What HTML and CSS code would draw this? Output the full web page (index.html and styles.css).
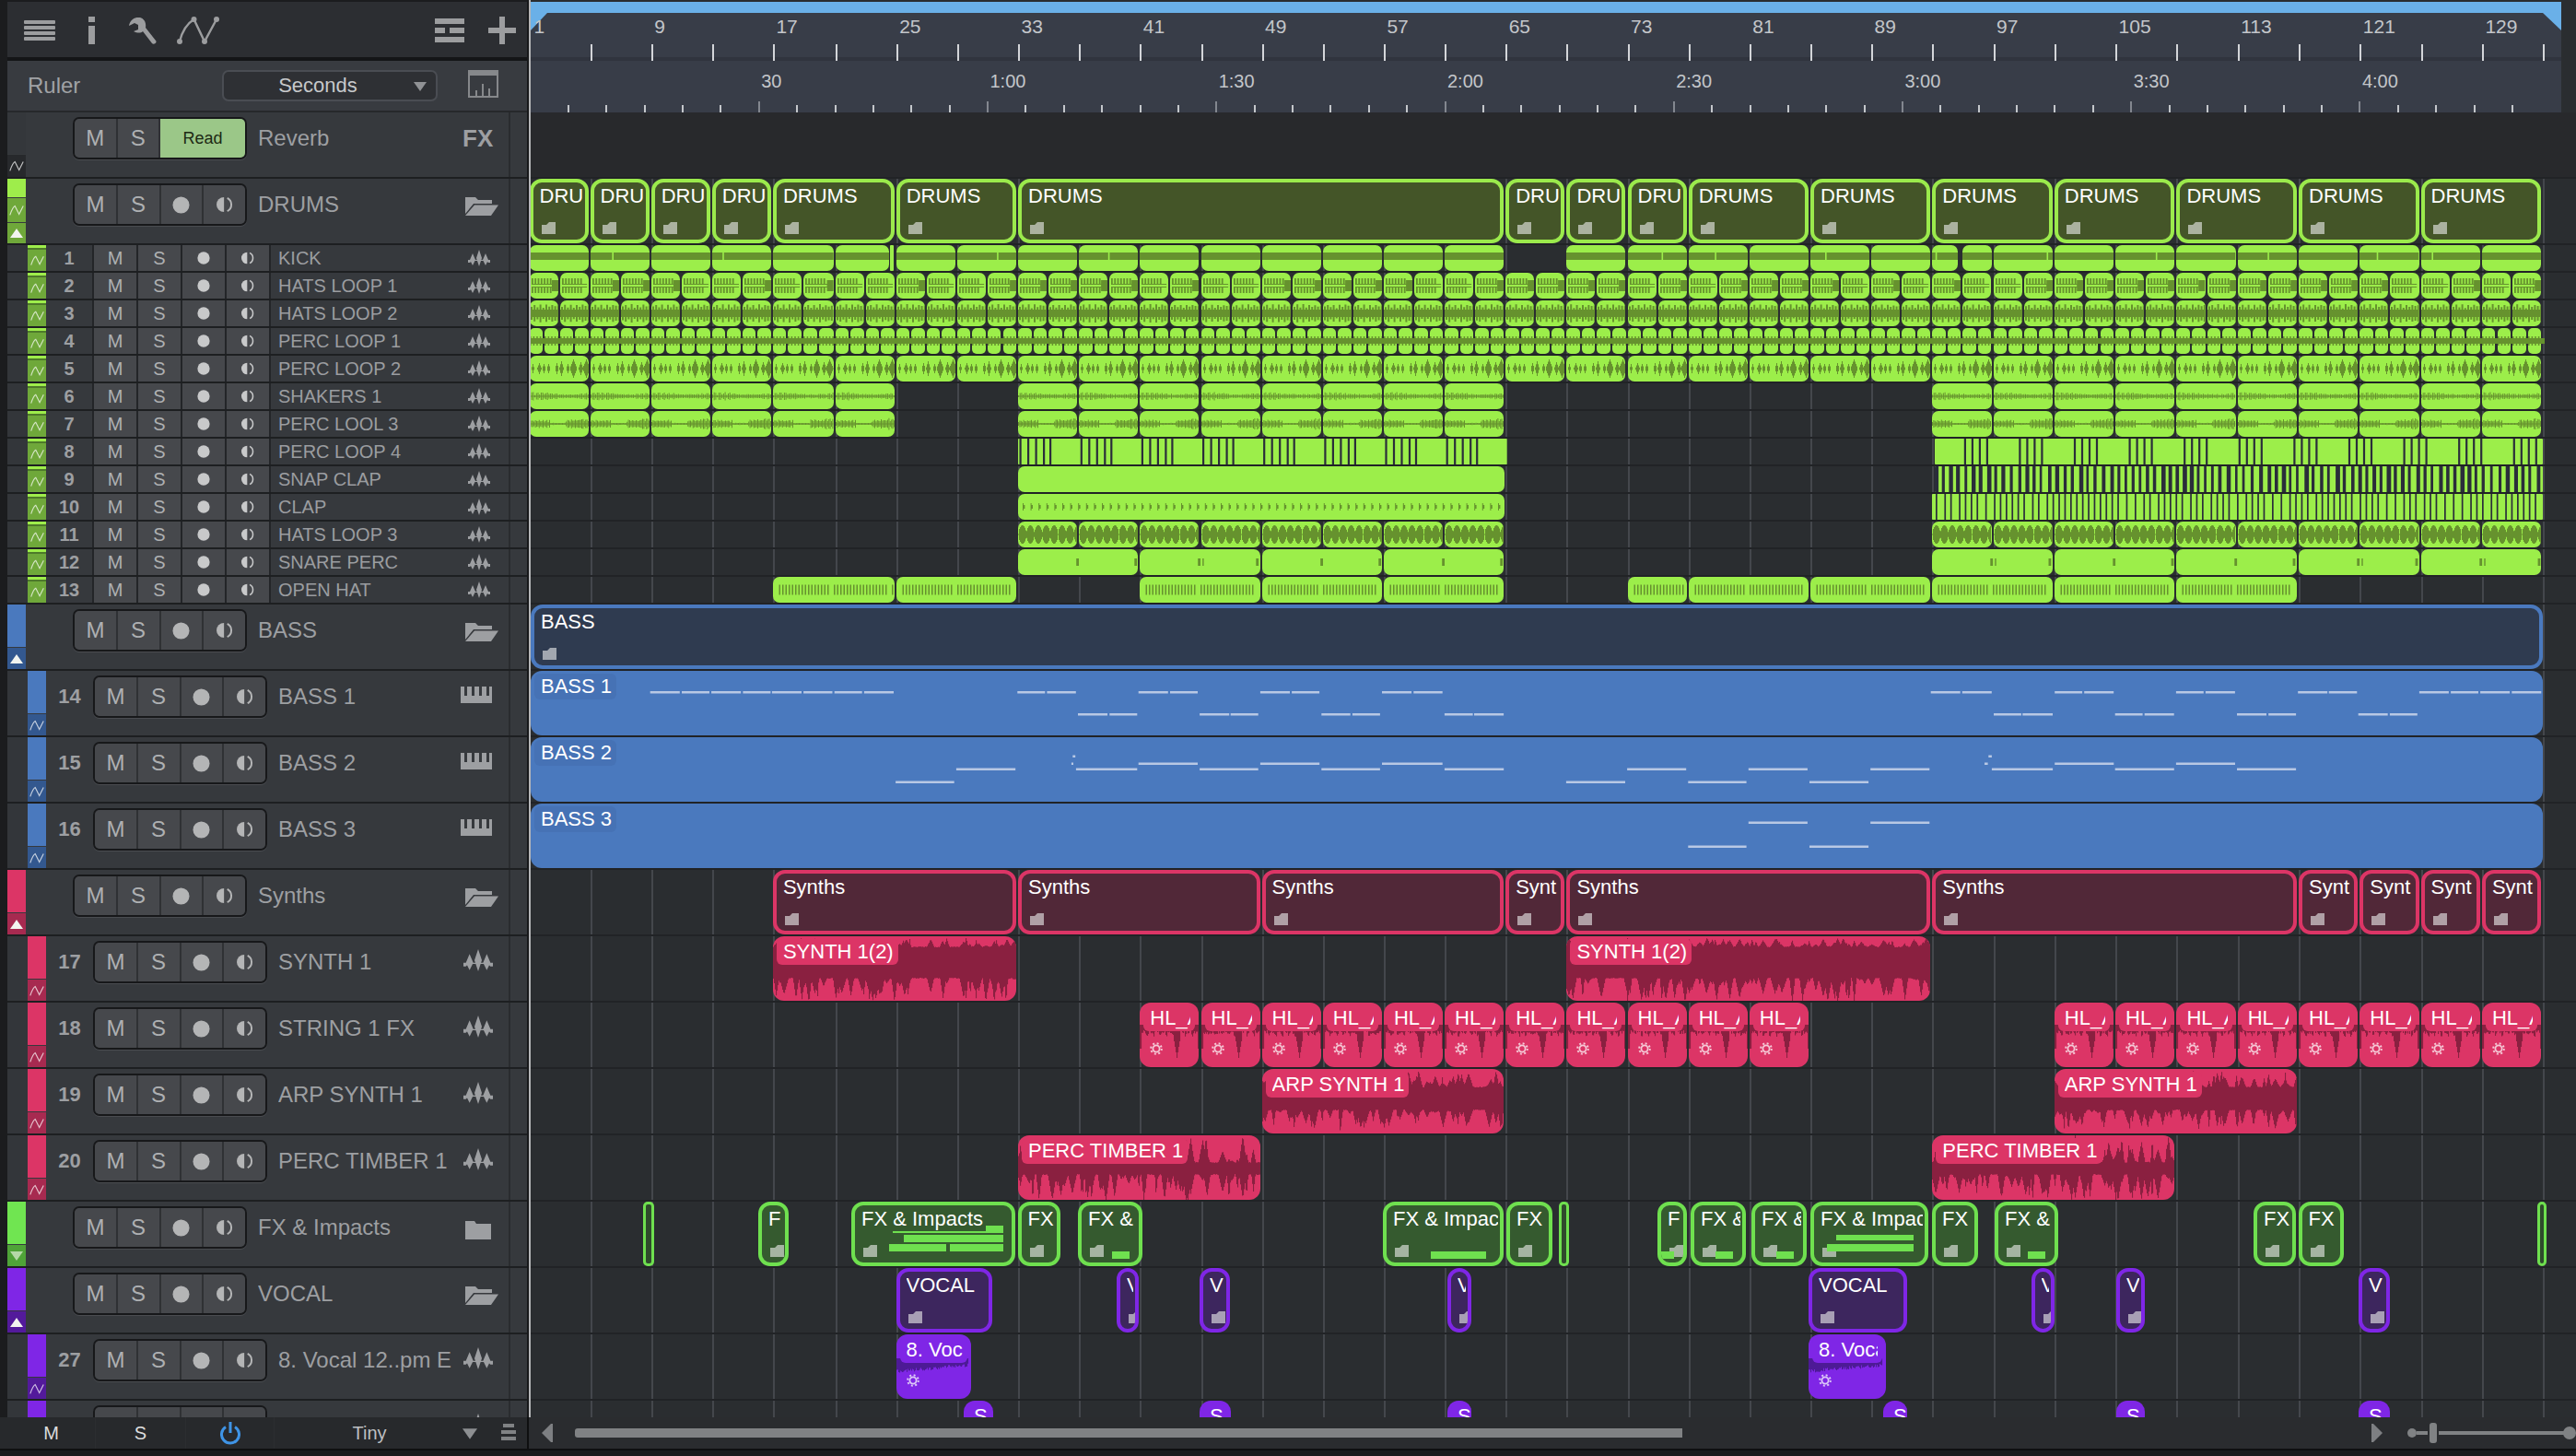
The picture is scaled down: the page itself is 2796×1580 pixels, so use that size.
FILE: index.html
```html
<!DOCTYPE html>
<html lang="en">
<head>
<meta charset="utf-8">
<title>Arrangement</title>
<link rel="stylesheet" href="styles.css">
</head>
<body>
<svg class="defs" width="0" height="0" aria-hidden="true">
  <symbol id="i-auto" viewBox="0 0 20 14"><path d="M2 13 C4 7 6 3 8 2 L13 12 L18 2" fill="none" stroke="currentColor" stroke-width="1.3"/></symbol>
  <symbol id="i-up" viewBox="0 0 14 10"><path d="M7 0 L14 10 H0Z" fill="currentColor"/></symbol>
  <symbol id="i-down" viewBox="0 0 14 10"><path d="M0 0 H14 L7 10Z" fill="currentColor"/></symbol>
  <symbol id="i-rec" viewBox="0 0 20 20"><circle cx="10" cy="10" r="9.5" fill="currentColor"/></symbol>
  <symbol id="i-mon" viewBox="0 0 20 20"><path d="M9 1 A9 9 0 0 0 9 19Z" fill="currentColor"/><path d="M13 2 A9 9 0 0 1 13 18" fill="none" stroke="currentColor" stroke-width="2.2"/></symbol>
  <symbol id="i-peaks" viewBox="0 0 24 18"><path d="M5 4 L8 11 L5 17 L2 11Z M12 0 L15 9 L12 18 L9 9Z M19 4 L22 11 L19 17 L16 11Z M0 11 L24 11 L24 14 L22 14 L20 12 L4 12 L2 14 L0 14Z" fill="currentColor"/></symbol>
  <symbol id="i-fopen" viewBox="0 0 36 20"><path d="M0 0 H11 L14 3 H29 V7 H9 L0 18Z" fill="currentColor"/><path d="M10 8.5 H36 L28 20 H0Z" fill="currentColor"/></symbol>
  <symbol id="i-fclosed" viewBox="0 0 28 20"><path d="M0 0 H10 L12 3 H28 V20 H0Z" fill="currentColor"/></symbol>
  <symbol id="i-keys" viewBox="0 0 34 18"><path d="M0 0 H34 V18 H0Z M4 0 V10 H7 V0Z M12 0 V10 H15 V0Z M20 0 V10 H23 V0Z M28 0 V10 H31 V0Z" fill="currentColor" fill-rule="evenodd"/></symbol>
  <symbol id="i-mini" viewBox="0 0 15 13"><path d="M0 3 H5 L8 0 H15 V13 H0Z" fill="currentColor"/></symbol>
  <symbol id="i-gear" viewBox="0 0 14 14"><circle cx="7" cy="7" r="3.6" fill="none" stroke="currentColor" stroke-width="1.8"/><circle cx="7" cy="7" r="5.8" fill="none" stroke="currentColor" stroke-width="2" stroke-dasharray="2 2.55"/></symbol>
</svg>

<div class="app">
  <div class="main">
    <aside class="panel">
      <div class="toolbar">
        <svg class="ti ti-menu" width="34" height="22" viewBox="0 0 34 22"><path d="M1 0 H33 a1 1 0 0 1 1 1 V3 a1 1 0 0 1 -1 1 H1 a1 1 0 0 1 -1 -1 V1 a1 1 0 0 1 1 -1Z M1 6 H33 a1 1 0 0 1 1 1 V9 a1 1 0 0 1 -1 1 H1 a1 1 0 0 1 -1 -1 V7 a1 1 0 0 1 1 -1Z M1 12 H33 a1 1 0 0 1 1 1 V15 a1 1 0 0 1 -1 1 H1 a1 1 0 0 1 -1 -1 V13 a1 1 0 0 1 1 -1Z M1 18 H33 a1 1 0 0 1 1 1 V21 a1 1 0 0 1 -1 1 H1 a1 1 0 0 1 -1 -1 V19 a1 1 0 0 1 1 -1Z" fill="currentColor"/></svg>
        <svg class="ti ti-info" width="7" height="30" viewBox="0 0 7 30"><path d="M0 0 H7 V6 H0Z M0 10 H7 V30 H0Z" fill="currentColor"/></svg>
        <svg class="ti ti-wrench" width="31" height="30" viewBox="0 0 31 30"><path d="M12 0 C6 -1 1 3 0 9 L6 6 L10 8 L10 13 L5 15 C9 17 13 17 15 15 L25 28 C27 30 31 27 29 25 L18 11 C19 5 16 1 12 0Z" fill="currentColor"/></svg>
        <svg class="ti ti-curve" width="47" height="30" viewBox="0 0 47 30"><path d="M3 27 C6 15 12 7 18.5 3 L30 27 L43 3" fill="none" stroke="currentColor" stroke-width="2.4"/><circle cx="3" cy="27" r="3" fill="currentColor"/><circle cx="18.5" cy="3" r="3" fill="currentColor"/><circle cx="30" cy="27" r="3" fill="currentColor"/><circle cx="43" cy="3" r="3" fill="currentColor"/></svg>
        <svg class="ti ti-list" width="32" height="26" viewBox="0 0 32 26"><path d="M0 0 H32 V6 H0Z M0 10 H11 V16 H0Z M16 10 H32 V16 H16Z M0 20 H32 V26 H0Z" fill="currentColor"/></svg>
        <svg class="ti ti-plus" width="30" height="30" viewBox="0 0 30 30"><path d="M12 0 H18 V12 H30 V18 H18 V30 H12 V18 H0 V12 H12Z" fill="currentColor"/></svg>
      </div>
      <div class="rulerbar">
        <span class="rb-label">Ruler</span>
        <div class="select"><span class="select-text">Seconds</span><svg class="select-tri" width="16" height="10"><use href="#i-down"/></svg></div>
        <svg class="rb-icon" width="33" height="30" viewBox="0 0 33 30"><path d="M0 0 H33 V30 H0Z M2 6 V28 H31 V6Z M8 22 H10 V28 H8Z M15 15 H17 V28 H15Z M22 20 H24 V28 H22Z" fill="currentColor" fill-rule="evenodd"/></svg>
      </div>
      <div class="tracks" id="tracks"></div>
    </aside>
    <section class="arrange">
      <div class="ruler" id="ruler">
        <div class="loop"></div>
        <div class="loop-l"></div>
        <div class="loop-r"></div>
        <div class="ruler-sep"></div>
      </div>
      <div class="lanes" id="lanes"></div>
    </section>
  </div>
  <footer class="bottom">
    <div class="bb-left">
      <span class="bb-cell bb-m">M</span>
      <span class="bb-cell bb-s">S</span>
      <span class="bb-cell bb-pw"><svg width="22" height="26" viewBox="0 0 22 26"><path d="M6 6.5 A9.5 9.5 0 1 0 16 6.5" fill="none" stroke="currentColor" stroke-width="3"/><path d="M11 1 V13" stroke="currentColor" stroke-width="3"/></svg></span>
      <span class="bb-cell bb-size"><span>Tiny</span><svg class="bb-tri" width="16" height="12"><use href="#i-down"/></svg></span>
      <svg class="bb-list" width="16" height="18" viewBox="0 0 16 18"><path d="M2 0 H14 V4 H2Z M0 7 H16 V11 H0Z M0 14 H16 V18 H0Z" fill="currentColor"/></svg>
    </div>
    <div class="bb-right">
      <svg class="bb-arrow" width="12" height="20" viewBox="0 0 12 20"><path d="M12 0 V20 H10 L0 10 L10 0Z" fill="currentColor"/></svg>
      <div class="thumb"></div>
      <svg class="bb-arrow bb-arrow-r" width="12" height="20" viewBox="0 0 12 20"><path d="M0 0 V20 H2 L12 10 L2 0Z" fill="currentColor"/></svg>
      <div class="zoom">
        <span class="z-dot"></span><span class="z-line z-line-a"></span><span class="z-handle"></span><span class="z-line z-line-b"></span><span class="z-knob"></span>
      </div>
    </div>
  </footer>
</div>
<script src="app.js"></script>
</body>
</html>
```

FILE: styles.css
```css
* { box-sizing: border-box; }
html, body { margin: 0; padding: 0; }
body {
  width: 2796px; height: 1580px; overflow: hidden;
  background: #1b1c1e;
  font-family: "Liberation Sans", Arial, sans-serif;
  color: #a3a5a8;
}
.defs { position: absolute; }
.app { width: 2796px; height: 1580px; display: flex; flex-direction: column; }
.main { display: flex; height: 1538px; padding-left: 8px; }

/* left panel */
.panel { width: 566px; height: 1538px; display: flex; flex-direction: column; overflow: hidden;
  border-right: 2px solid #17181a; padding-top: 2px; flex: none; }
.toolbar { height: 64px; flex: none; background: #2c2e32; border-bottom: 4px solid #141517; position: relative; }
.ti { position: absolute; color: #9c9d9f; }
.ti-menu { left: 18px; top: 20px; }
.ti-info { left: 88px; top: 16px; }
.ti-wrench { left: 132px; top: 17px; }
.ti-curve { left: 184px; top: 16px; }
.ti-list { left: 464px; top: 18px; }
.ti-plus { left: 522px; top: 16px; }
.rulerbar { height: 56px; flex: none; background: #383b40; border-bottom: 2px solid #26282b;
  display: flex; align-items: center; position: relative; }
.rb-label { margin-left: 22px; font-size: 24px; color: #a0a2a5; width: 211px; }
.select { width: 234px; height: 34px; border: 2px solid #4a4d53; border-radius: 7px; background: #2e3034;
  display: flex; align-items: center; justify-content: center; position: relative; }
.select-text { font-size: 22px; color: #c6c8ca; margin-right: 26px; }
.select-tri { position: absolute; right: 9px; top: 11px; color: #909295; }
.rb-icon { color: #86888b; margin-left: 33px; margin-top: -4px; }
.tracks { flex: 1; overflow: hidden; }

.row { display: flex; height: 72px; background: #36393d; border-bottom: 2px solid #1d1f21; position: relative; }
.row.small { height: 30px; }
.strip { width: 20px; flex: none; display: flex; flex-direction: column; gap: 1px; }
.strip-flush { gap: 0; }
.strip-wide { margin-right: 2px; }
.gutter { width: 22px; flex: none; background: #33363a; }
.seg { display: flex; align-items: center; justify-content: center; flex: none; }
.seg svg { display: block; }
.seg-auto svg { color: rgba(255,255,255,.72); }
.seg-tri svg { color: #f2f4ef; }
.seg-tri-dim svg { color: #b5d8a8; }

.num { width: 51px; flex: none; display: flex; align-items: center; justify-content: center; height: 45px; margin-top: 5px;
  font-size: 22px; font-weight: bold; color: #9d9fa2; }
.btns { display: flex; height: 46px; margin-top: 5px; flex: none; border: 2px solid #17181a; border-radius: 7px; overflow: hidden;
  background: #2f3134; gap: 2px; box-shadow: 0 1px 0 #4a4c50; }
.f-btns { margin-left: 49px; width: 189px; }
.s-btns { width: 189px; }
.btn { flex: 1; background: #46484c; display: flex; align-items: center; justify-content: center; font-size: 24px; color: #aeb0b2; }
.btn svg { color: #b4b5b6; }
.btn-read { flex: none; width: 92px; background: #9bc788; color: #1d2a14; font-size: 18px; }
.name { margin-left: 12px; margin-top: 11px; font-size: 24px; line-height: 34px; flex: 1; min-width: 0; white-space: nowrap; overflow: hidden; color: #9d9fa2; }
.right-icon { flex: none; width: 47px; display: flex; align-items: flex-start; padding-top: 20px; color: #9d9fa2; }
.right-icon.fx { font-size: 26px; font-weight: bold; padding-top: 13px; margin-left: -3px; width: 50px; }
.right-icon.wide { margin-left: -2px; width: 49px; padding-top: 14px; }
.right-icon.keys { margin-left: -5px; width: 52px; padding-top: 17px; }
.right-icon.closed { padding-top: 21px; }
.rail { width: 20px; flex: none; border-left: 2px solid #2a2c2f; }

.small .num { height: 28px; margin-top: 0; font-size: 20px; width: 50px; }
.s-cells { display: flex; gap: 2px; background: #232528; border-left: 2px solid #232528; border-right: 2px solid #232528; flex: none; height: 28px; }
.cell { width: 46px; background: #46484c; font-size: 20px; display: flex; align-items: center; justify-content: center; color: #aeb0b2; }
.cell svg { color: #c8c9ca; }
.small .name { font-size: 20px; line-height: 28px; margin: 0 0 0 8px; color: #9b9da0; }
.small .right-icon { padding-top: 5px; width: 44px; }

/* arrange */
.arrange { flex: 1; min-width: 0; height: 1538px; display: flex; flex-direction: column; border-left: 2px solid #b5b6b8; position: relative; overflow: hidden; background: #2a2d30; }
.ruler { width: 2204px; flex: none; margin-top: 2px; background: #383d48; position: relative; height: 120px; }
.loop { position: absolute; left: 0; top: 0; width: 2204px; height: 12px; background: #6ab0e8; }
.loop-l { position: absolute; left: 0; top: 12px; width: 18px; height: 19px; background: #6ab0e8; clip-path: polygon(0 0, 100% 0, 0 100%); }
.loop-r { position: absolute; right: 0; top: 12px; width: 20px; height: 19px; background: #6ab0e8; clip-path: polygon(0 0, 100% 0, 100% 100%); }
.ruler-sep { position: absolute; left: 0; top: 60px; width: 100%; height: 4px; background: #30343e; }
.tick { position: absolute; width: 2px; background: #d3d5d9; }
.tick-bar { top: 46px; height: 18px; }
.tick-sec { top: 112px; height: 8px; background: #c4c7cb; }
.tick-maj { top: 108px; height: 12px; background: #83878f; }
.rlabel { position: absolute; color: #c3c6ca; white-space: nowrap; }
.rl-bar { top: 15px; font-size: 21px; line-height: 24px; }
.rl-sec { top: 74px; font-size: 20px; line-height: 24px; }

.lanes { flex: 1; position: relative; overflow: hidden; background: #2a2d30; }
.gline { position: absolute; top: 0; bottom: 0; width: 2px; background: #44474c; }
.lane { height: 72px; position: relative; border-bottom: 2px solid #212326; }
.lane.small { height: 30px; }
.lane-top { background: #28292c; }
.pband { position: absolute; top: 11px; height: 6px; background: #66922e; }

.clip { position: absolute; top: 0; bottom: 0; overflow: hidden; color: #fff; }
.clip svg.wave { position: absolute; left: 0; top: 0; display: block; }
.c-ev { border-radius: 12px; }
.c-sm { border-radius: 7px; }
.c-xs { border-radius: 5px; }
.c-sq { border-radius: 1px; }
.g { background: #9cee4a; }
.g .wf { fill: #66922e; }
.g .wb { fill: #2a2d3a; }
.g .wl { fill: #9cee4a; }
.bl { background: #4a79be; }
.bl .wf { fill: #b8c8e4; }
.rd { background: #dc3566; }
.rd .wf { fill: #8a2040; }
.vi { background: #7f26e6; }
.vi .wf { fill: #4d1a96; }
.chip { position: relative; display: block; width: max-content; font-size: 22px; line-height: 28px; height: 28px; margin: 3px 0 0 4px; padding: 0 5px 0 7px;
  border-radius: 6px; white-space: nowrap; max-width: calc(100% - 8px); }
.chip-t { display: block; overflow: hidden; }
.narrow .chip { padding-right: 0; max-width: none; }
.rd .chip { background: #dc3566; }
.vi .chip { background: #7f26e6; }
.bl .chip { background: #4672b5; }
.gear { position: absolute; left: 11px; bottom: 13px; }
.rd .gear { color: #f5c9d6; }
.vi .gear { color: #dcc8f7; }

.fold { border: 4px solid; border-radius: 13px; padding: 0 2px 0 7px; }
.fold-in { height: 28px; line-height: 29px; font-size: 22px; white-space: nowrap; overflow: hidden; position: relative; }
.mini { position: absolute; left: 9px; bottom: 6px; opacity: .6; color: #f0f0f0; }
.f-g { background: #445528; border-color: #9bea4c; }
.f-b { background: #2f3b50; border-color: #4a79be; }
.f-r { background: #512838; border-color: #dc3566; }
.f-l { background: #355a2f; border-color: #6fe04f; }
.f-v { background: #3d265e; border-color: #7f26e6; }
.f-thin { border-width: 3px; border-radius: 5px; padding: 0; background: #2f4a2c; }
.fxbar { position: absolute; background: #6fe04f; }

/* bottom */
.bottom { height: 36px; flex: none; display: flex; background: #27292c; border-bottom: 2px solid #0f1011; }
.bb-left { width: 566px; margin-left: 8px; flex: none; position: relative; display: flex; align-items: center; border-right: 2px solid #0e0f10; }
.bb-cell { display: flex; align-items: center; justify-content: center; height: 34px; border-right: 1px solid #2b2d30; flex: none; }
.bb-m { width: 96px; font-size: 20px; color: #dcdcdc; }
.bb-s { width: 98px; font-size: 20px; color: #dcdcdc; }
.bb-pw { width: 96px; color: #3f94e6; }
.bb-size { width: 232px; padding-right: 26px; font-size: 20px; color: #bdbfc1; border-right: 0; position: relative; }
.bb-tri { position: absolute; right: 12px; top: 12px; color: #8d8f92; }
.bb-list { position: absolute; left: 536px; top: 7px; color: #808284; }
.bb-right { flex: 1; display: flex; align-items: center; background: #2a2c2f; color: #7d7f82; min-width: 0; overflow: hidden; }
.bb-arrow { margin-left: 14px; flex: none; }
.thumb { width: 1202px; height: 10px; margin-left: 24px; background: #808284; border-radius: 3px 0 0 3px; flex: none; }
.bb-arrow-r { margin-left: 748px; }
.zoom { display: flex; align-items: center; margin-left: 27px; flex: none; }
.z-dot { width: 10px; height: 10px; border-radius: 50%; background: #808284; }
.z-line { height: 4px; background: #808284; }
.z-line-a { width: 12px; }
.z-handle { width: 8px; height: 22px; margin: 0 2px; border-radius: 3px; background: #808284; }
.z-line-b { width: 136px; }
.z-knob { width: 14px; height: 14px; border-radius: 50%; background: #808284; margin-left: -1px; flex: none; }
```

FILE: app.js
```javascript
// Track list and arrangement are built from data; waveforms are seeded noise.
const ARR_LEFT = 576;
const X = i => i < 5 ? 574.5 + 66.1 * i : i <= 23 ? 972.7 + 66.15 * (i - 6) : 2097.2 + 66.3 * (i - 23);

let seed = 1234567;
const rnd = () => { seed = (seed * 1664525 + 1013904223) >>> 0; return seed / 4294967296; };
const rect = (x, y, w, h) => `M${x.toFixed(1)} ${y.toFixed(1)}h${w.toFixed(1)}v${h.toFixed(1)}h${(-w).toFixed(1)}z`;
const sym = (x, a, c, w) => rect(x, c - a, w || 1, a * 2);
const use = (id, w, h, cls) => `<svg ${cls ? `class="${cls}" ` : ''}width="${w}" height="${h}"><use href="#${id}"/></svg>`;

// The visible part of a clip's name: characters that begin inside the room available.
const ctx = document.createElement('canvas').getContext('2d');
ctx.font = '22px "Liberation Sans"';
function fit(name, avail) {
  let out = '', at = 0;
  avail = Math.max(1, avail);
  for (const ch of name) {
    if (at >= avail) break;
    out += ch;
    at = ctx.measureText(out).width;
  }
  return out.trimEnd().replace(/&/g, '&amp;');
}

/* ---------- left panel ---------- */
const colours = {
  g: ['#9eed4b', '#6fa83a'], b: ['#4a79be', '#33588f'], r: ['#dc3566', '#a72a50'],
  l: ['#70e551', '#4fa338'], v: ['#7f26e6', '#531a9b']
};
const recBig = use('i-rec', 19, 19), monBig = use('i-mon', 18, 18);
const bigBtns = cls => `<div class="btns ${cls}"><span class="btn">M</span><span class="btn">S</span><span class="btn">${recBig}</span><span class="btn">${monBig}</span></div>`;

function seg(h, col, cls, inner) {
  return `<div class="seg ${cls || ''}" style="height:${h}px;background:${col}">${inner || ''}</div>`;
}
function folderRow(t) {
  const [hi, lo] = colours[t.c];
  let s;
  if (t.c === 'g') s = seg(20, hi) + seg(26, lo, 'seg-auto', use('i-auto', 18, 14)) + seg(22, lo, 'seg-tri', use('i-up', 14, 10));
  else if (t.closed) s = seg(46, hi) + seg(23, lo, 'seg-tri-dim', use('i-down', 14, 10));
  else s = seg(46, hi) + seg(23, lo, 'seg-tri', use('i-up', 14, 10));
  return `<div class="row"><div class="strip strip-wide">${s}</div>${bigBtns('f-btns')}
    <div class="name">${t.name}</div>
    <div class="right-icon ${t.closed ? 'closed' : ''}">${t.closed ? use('i-fclosed', 28, 20) : use('i-fopen', 36, 20)}</div><div class="rail"></div></div>`;
}
function reverbRow() {
  return `<div class="row"><div class="strip strip-wide">${seg(45, '#34373b') + seg(24, '#27292c', 'seg-auto', use('i-auto', 18, 14))}</div>
    <div class="btns f-btns"><span class="btn">M</span><span class="btn">S</span><span class="btn btn-read">Read</span></div>
    <div class="name">Reverb</div><div class="right-icon fx">FX</div><div class="rail"></div></div>`;
}
function subRow(t) {
  const [hi, lo] = colours[t.c];
  const icon = t.keys ? use('i-keys', 34, 18) : use('i-peaks', 32, 24);
  return `<div class="row"><div class="gutter"></div><div class="strip">${seg(46, hi) + seg(23, lo, 'seg-auto', use('i-auto', 18, 14))}</div>
    <div class="num">${t.n}</div>${bigBtns('s-btns')}<div class="name">${t.name}</div>
    <div class="right-icon ${t.keys ? 'keys' : 'wide'}">${icon}</div><div class="rail"></div></div>`;
}
function smallRow(n, name) {
  return `<div class="row small"><div class="gutter"></div><div class="strip strip-flush">${seg(3, '#9eed4b') + seg(2, '#4e7a2a') + seg(23, '#6fa83a', 'seg-auto', use('i-auto', 17, 13))}</div>
    <div class="num">${n}</div><div class="s-cells"><span class="cell">M</span><span class="cell">S</span><span class="cell">${use('i-rec', 14, 14)}</span><span class="cell">${use('i-mon', 14, 14)}</span></div>
    <div class="name">${name}</div><div class="right-icon">${use('i-peaks', 24, 18)}</div><div class="rail"></div></div>`;
}
const drumNames = ['KICK', 'HATS LOOP 1', 'HATS LOOP 2', 'PERC LOOP 1', 'PERC LOOP 2', 'SHAKERS 1', 'PERC LOOL 3', 'PERC LOOP 4', 'SNAP CLAP', 'CLAP', 'HATS LOOP 3', 'SNARE PERC', 'OPEN HAT'];
let html = reverbRow() + folderRow({ c: 'g', name: 'DRUMS' });
drumNames.forEach((n, i) => html += smallRow(i + 1, n));
html += folderRow({ c: 'b', name: 'BASS' });
html += subRow({ c: 'b', n: 14, name: 'BASS 1', keys: 1 }) + subRow({ c: 'b', n: 15, name: 'BASS 2', keys: 1 }) + subRow({ c: 'b', n: 16, name: 'BASS 3', keys: 1 });
html += folderRow({ c: 'r', name: 'Synths' });
html += subRow({ c: 'r', n: 17, name: 'SYNTH 1' }) + subRow({ c: 'r', n: 18, name: 'STRING 1 FX' }) + subRow({ c: 'r', n: 19, name: 'ARP SYNTH 1' }) + subRow({ c: 'r', n: 20, name: 'PERC TIMBER 1' });
html += folderRow({ c: 'l', name: 'FX &amp; Impacts', closed: 1 }) + folderRow({ c: 'v', name: 'VOCAL' });
html += subRow({ c: 'v', n: 27, name: '8. Vocal 12..pm E' }) + subRow({ c: 'v', n: '', name: '' });
document.getElementById('tracks').innerHTML = html;

/* ---------- ruler ---------- */
let rul = '';
const L = x => (x - ARR_LEFT).toFixed(1);
for (let i = 1; i <= 33; i++) rul += `<span class="tick tick-bar" style="left:${L(X(i))}px"></span>`;
for (let k = 0; k <= 16; k++) {
  rul += `<span class="rlabel rl-bar" style="left:${L(X(k * 2) + (k === 0 ? 5 : 3.5))}px">${k * 8 + 1}</span>`;
}
const secLabels = ['30', '1:00', '1:30', '2:00', '2:30', '3:00', '3:30', '4:00'];
secLabels.forEach((t, k) => {
  const x = 822.7 + k * 248.25;
  rul += `<span class="tick tick-maj" style="left:${L(x)}px"></span><span class="rlabel rl-sec" style="left:${L(x + 3.5)}px">${t}</span>`;
});
for (let k = -5; k <= 47; k++) {
  if (k % 6 === 0 && k >= 0) continue;
  const x = 822.7 + k * 41.375;
  if (x < 2765) rul += `<span class="tick tick-sec" style="left:${L(x)}px"></span>`;
}
document.getElementById('ruler').insertAdjacentHTML('beforeend', rul);

/* ---------- clips ---------- */
const svg = (w, h, parts) => `<svg class="wave" width="${Math.ceil(w)}" height="${h}">${parts.map(([cls, d]) => `<path class="${cls}" d="${d}"/>`).join('')}</svg>`;
function clip(x1, x2, cls, inner) {
  return `<div class="clip ${cls}" style="left:${L(x1)}px;width:${(x2 - x1).toFixed(1)}px">${inner || ''}</div>`;
}
function folder(x1, x2, c, name, extra) {
  const w = x2 - x1;
  if (w < 16) return clip(x1, x2, `fold f-${c} f-thin`);
  return clip(x1, x2, `fold f-${c}`, `<div class="fold-in">${fit(name, w - 24)}</div>${use('i-mini', 15, 13, 'mini')}${extra || ''}`);
}
const chip = (name, w) => `<span class="chip"><span class="chip-t">${fit(name, w - 22)}</span></span>`;
const cellClip = (a, b, fn, cls) => {
  const x1 = X(a), x2 = X(b) - 2, w = x2 - x1;
  return clip(x1, x2, `g ${cls || 'c-sm'}`, svg(w, 28, fn(w, x1)));
};
const H = 28, C = 14;

// 1 kick
const kickBreaks = [664, 784, 1082, 1203, 1803, 1861, 1981, 2101, 2221, 2340, 2461, 2580, 2639];
const kickWave = (w, x1) => {
  let d = rect(0, 8, w, 8), l = '';
  kickBreaks.forEach(b => { if (b > x1 && b < x1 + w) l += rect(b - x1, 8, 1.6, 8); });
  return [['wf', d], ['wl', l]];
};
// 2 hats loop 1
const hats1 = (w) => {
  let d = '';
  for (let x = 2; x < w - 8; x += 3.3) d += rect(x, 6, 1.8, 6.5) + rect(x, 15.5, 1.8, 6.5);
  d += rect(2, 12, w - 4, 1) + rect(2, 15, w - 4, 1);
  if (rnd() > .4) d += rect(w - 7, 8, 7, 12);
  return [['wf', d]];
};
// 3 hats loop 2
const hats2 = (w) => {
  let d = rect(0, 10, w, 8);
  for (let x = 1; x < w - 1; x += 3.2) {
    const a = 5 + Math.abs(Math.sin(x * .45)) * 4 + rnd();
    d += sym(x, a, C, 2);
  }
  return [['wf', d]];
};
// 4 perc loop 1
const perc1 = (w) => {
  let d = '';
  for (let x = 0; x < w; x += 3.6) d += sym(x, 5, C, 1.6);
  return [['wf', d]];
};
// 5 perc loop 2
const blobs = [[3, 5, 1.5], [10, 6, 2.5], [15, 5, 2], [20, 5, 2], [29, 6, 2], [34, 8, 2.5], [41, 5, 2], [47, 10, 4], [55, 7, 2.5], [61, 10, 4.2]];
const perc2 = (w) => {
  let d = '';
  for (let x = 0; x < w; x++) {
    let a = 0;
    blobs.forEach(([c, h, b]) => { a = Math.max(a, h * (1 - Math.abs(x - c) / b)); });
    if (a > .4) d += sym(x, a, C, 1);
  }
  return [['wf', d]];
};
// 6 shakers
const shakers = (w) => {
  let d = rect(0, 13.5, w, 1);
  for (let x = 0; x < w; x += 1.7) {
    const a = 1 + (Math.abs(Math.sin(x * .6)) * 2.8) * (.6 + .4 * Math.sin(x * .09 + 1)) + rnd() * 1;
    d += sym(x, a, C, 1);
  }
  return [['wf', d]];
};
// 7 perc lool 3
const lool3 = (w) => {
  let d = rect(0, 13.5, w, 1);
  for (let x = 0; x < w; x += 1.4) {
    const t = x / w;
    const env = t < .33 ? 4 : t < .6 ? .6 : t < .85 ? 4.5 : 6;
    d += sym(x, .6 + env * (.45 + .55 * Math.abs(Math.sin(x * .8))) * (.7 + rnd() * .3), C, 1);
  }
  return [['wf', d]];
};
// 8 perc loop 4, bars
const bars = (x1, w, start, period, pattern, wd) => {
  let d = '';
  for (let s = start; s < x1 + w; s += period) pattern.forEach(o => {
    const px = s + o - x1;
    if (px > -3 && px < w) d += rect(px, 0, wd, H);
  });
  return d;
};
// 11 hats loop 3
const hats3 = (w) => {
  let d = '';
  for (let x = 0; x < w - 1; x++) {
    const p = Math.abs(Math.sin(x * Math.PI / 8.6));
    d += sym(x, Math.pow(p, .55) * 9.5 + .5, C, 1);
  }
  return [['wf', d]];
};
// 13 open hat
const openHat = (w) => {
  let d = '';
  for (let x = 3; x < w - 2; x += 3.5) {
    if (x % 62 < 3.6) continue;
    d += sym(x, 5.5, C, 1.5);
  }
  return [['wf', d]];
};

const range = (a, b, step) => { const o = []; for (let i = a; i < b - 1e-6; i += step) o.push(i); return o; };
const drumRows = Array.from({ length: 13 }, () => '');

// kick
range(0, 16, 1).forEach(i => {
  if (i === 5) {
    drumRows[0] += clip(X(5), X(6) - 8, 'g c-sm', svg(60, H, kickWave(60, X(5)))) + clip(X(6) - 6.5, X(6) - 3, 'g c-sq');
  } else drumRows[0] += cellClip(i, i + 1, kickWave);
});
range(17, 33, 1).forEach(i => {
  if (i === 23) {
    drumRows[0] += clip(X(23), X(23) + 28, 'g c-sm', svg(28, H, kickWave(28, X(23)))) + clip(X(23) + 33, X(24) - 2, 'g c-sm', svg(32, H, kickWave(32, X(23) + 33)));
  } else drumRows[0] += cellClip(i, i + 1, kickWave);
});
range(0, 33, .5).forEach(i => {
  drumRows[1] += cellClip(i, i + .5, hats1);
  drumRows[2] += cellClip(i, i + .5, hats2);
});
range(0, 33, .25).forEach(i => { drumRows[3] += cellClip(i, i + .25, perc1, 'c-xs'); });
drumRows[3] += `<span class="pband" style="left:${L(X(0))}px;width:${(X(33) + 2 - X(0)).toFixed(1)}px"></span>`;
range(0, 33, 1).forEach(i => { drumRows[4] += cellClip(i, i + 1, perc2); });
[...range(0, 6, 1), ...range(8, 16, 1), ...range(23, 33, 1)].forEach(i => {
  drumRows[5] += cellClip(i, i + 1, shakers);
  drumRows[6] += cellClip(i, i + 1, lool3);
});
// row 8 bars
const sq = (x1, x2, parts) => clip(x1, x2, 'g c-sq', svg(x2 - x1, H, parts));
drumRows[7] += sq(X(8), X(16) + 2, [['wb', bars(X(8), X(16) + 2 - X(8), X(8), 66.15, [1.5, 10, 18.5, 27, 34], 2.2)]]);
drumRows[7] += sq(X(23) + 3, X(33), [['wb', bars(X(23) + 3, X(33) - X(23) - 3, 2073, 59.6, [59, 67, 75, 83], 2.2)]]);
// row 9
drumRows[8] += clip(X(8), X(16) - 1, 'g c-sm');
let rb = '';
{
  const w = X(33) - X(23) - 3;
  for (let x = 0; x < w; x += 7.7 + (rnd() > .7 ? 1.5 : 0)) rb += rect(x, 0, 2.6 + rnd() * 2.2, H);
  drumRows[8] += sq(X(23) + 3, X(33), [['wb', rb]]);
}
// row 10
{
  const w = X(16) - X(8) - 1;
  let d = '';
  for (let x = 5; x < w; x += 8.6) d += sym(x, 4, C, 1) + sym(x + 1, 2, C, 1.4);
  drumRows[9] += clip(X(8), X(16) - 1, 'g c-sm', svg(w, H, [['wf', d]]));
  const w2 = X(33) - X(23);
  let e = '';
  for (let x = 4; x < w2; x += 6.4 + (rnd() > .75 ? 3 : 0)) e += rect(x, 0, 1.7, H);
  drumRows[9] += sq(X(23), X(33), [['wb', e]]);
}
[...range(8, 16, 1), ...range(23, 33, 1)].forEach(i => { drumRows[10] += cellClip(i, i + 1, hats3); });
// row 12 snare
const snare = n => (w) => {
  let d = rect(w * .485, 10, 2.8, 8) + rect(w - 4, 10, 2.8, 8);
  if (n) d += rect(w * .485 + 5, 10, 1.4, 8);
  return [['wf', d]];
};
[8, 10, 12, 14, 23, 25, 27, 29, 31].forEach(i => {
  drumRows[11] += cellClip(i, i + 2, snare(i > 27 || i === 10 || i === 23));
});
// row 13 open hat
[[4, 6], [6, 8], [10, 12], [12, 14], [14, 16], [18, 19], [19, 21], [21, 23], [23, 25], [25, 27], [27, 29]].forEach(([a, b]) => {
  drumRows[12] += cellClip(a, b, openHat);
});

/* notes for bass */
const z11 = p => 570 + p / 1.4, z12 = p => 1680 + p / 1.405;
const bassNotes = {
  b1: [
    [751, z11, [[190, 235], [238, 280], [283, 328], [331, 373], [375, 420], [423, 467], [470, 512], [515, 560], [748, 790], [793, 837], [932, 977], [980, 1022], [1117, 1162], [1165, 1207], [1302, 1347], [1350, 1394]]],
    [775, z11, [[840, 885], [888, 930], [1025, 1070], [1072, 1114], [1210, 1254], [1257, 1299], [1397, 1440], [1442, 1487]]],
    [751, z12, [[584, 629], [632, 677], [773, 815], [818, 863], [958, 1000], [1003, 1048], [1144, 1189], [1191, 1234], [1329, 1374], [1377, 1419], [1422, 1467], [1470, 1515]]],
    [775, z12, [[680, 722], [724, 770], [865, 907], [910, 955], [1051, 1096], [1099, 1141], [1236, 1281], [1284, 1326]]]
  ],
  b2: [
    [834.5, z11, [[655, 745], [837, 930], [1025, 1114], [1210, 1299], [1397, 1487]]],
    [828.5, z11, [[932, 1022], [1117, 1207], [1302, 1394], [830, 833]]],
    [848.5, z11, [[563, 652]]],
    [820.5, z11, [[832, 836]]],
    [834.5, z12, [[121, 211], [306, 396], [492, 582], [677, 770], [865, 955], [1051, 1141]]],
    [828.5, z12, [[773, 863], [958, 1048], [666, 671]]],
    [848.5, z12, [[28, 118], [214, 303], [399, 489]]],
    [820.5, z12, [[672, 677]]]
  ],
  b3: [
    [892.5, z12, [[306, 396], [492, 582]]],
    [918.5, z12, [[214, 303], [399, 489]]]
  ]
};
const bassClip = (name, top, key) => {
  const x1 = 576, x2 = 2760, w = x2 - x1;
  let d = '';
  bassNotes[key].forEach(([y, f, list]) => list.forEach(([a, b]) => { d += rect(f(a) - x1, y - top - 1, f(b) - f(a), 2.4); }));
  return clip(x1, x2, 'bl c-ev', svg(w, 70, [['wf', d]]) + chip(name, w));
};

/* synth waveforms */
function spiky(w, topBase, topVar, botBase, botVar, mid) {
  const a = new Float32Array(Math.ceil(w) + 1).fill(0), b = new Float32Array(Math.ceil(w) + 1).fill(0);
  for (let s = 0; s < w / 3.6; s++) {
    const c = rnd() * w, wd = 1.5 + rnd() * 3.5, ht = rnd(), hb = rnd();
    for (let x = Math.max(0, Math.floor(c - wd)); x < Math.min(w, c + wd); x++) {
      const k = 1 - Math.abs(x - c) / wd;
      a[x] = Math.max(a[x], k * ht * topVar);
      b[x] = Math.max(b[x], k * hb * botVar);
    }
  }
  let d = '';
  for (let x = 0; x < w; x++) {
    const t = topBase + a[x] + rnd(), bt = botBase + b[x] + rnd();
    d += rect(x, mid - t, 1.05, t + bt);
  }
  return d;
}
const synthClip = (a, b, name, tb, tv, bb, bv) => {
  const x1 = X(a), x2 = X(b) - 2, w = x2 - x1;
  return clip(x1, x2, 'rd c-ev', svg(w, 70, [['wf', spiky(w, tb, tv, bb, bv, 36)]]) + chip(name, w));
};
const hlClip = (a) => {
  const x1 = X(a), x2 = X(a + 1) - 2, w = x2 - x1;
  let d = '';
  for (let x = 0; x < w; x++) {
    let bot = 30 + rnd() * 4 + (x % 7 < 2 ? 3 : 0);
    const sp = Math.abs(x - 40);
    if (sp < 3.5) bot = 60 - sp * 6;
    if (x < 1.5 || x > w - 2) bot = 50;
    d += rect(x, 24, 1.05, bot - 24);
  }
  return clip(x1, x2, 'rd c-ev', svg(w, 70, [['wf', d]]) + chip('HL_A', w) + use('i-gear', 14, 14, 'gear'));
};
const vocClip = (x1, x2) => {
  const w = x2 - x1;
  let d = '';
  for (let x = 0; x < w - 4; x++) d += rect(x, 26, 1.05, 12 - x / w * 7 + rnd() * 4);
  return clip(x1, x2, 'vi c-ev', svg(w, 70, [['wf', d]]) + chip('8. Vocal', w) + use('i-gear', 14, 14, 'gear'));
};

const fxb = (x, y, w, h, cx) => `<div class="fxbar" style="left:${(x - cx - 11).toFixed(1)}px;top:${y - 1308}px;width:${w}px;height:${h}px"></div>`;
const rows = {};
rows.drums = [[0, 1], [1, 2], [2, 3], [3, 4], [4, 6], [6, 8], [8, 16], [16, 17], [17, 18], [18, 19], [19, 21], [21, 23], [23, 25], [25, 27], [27, 29], [29, 31], [31, 33]]
  .map(([a, b]) => folder(X(a), X(b) - 2, 'g', 'DRUMS')).join('');
rows.bass = folder(576, 2760, 'b', 'BASS');
rows.synths = [[4, 8], [8, 12], [12, 16], [16, 17], [17, 23], [23, 29], [29, 30], [30, 31], [31, 32], [32, 33]]
  .map(([a, b]) => folder(X(a), X(b) - 2, 'r', 'Synths')).join('');
rows.synth1 = synthClip(4, 8, 'SYNTH 1(2)', 24, 10, 9, 27) + synthClip(17, 23, 'SYNTH 1(2)', 24, 10, 9, 27);
rows.hl = [...range(10, 21, 1), ...range(25, 33, 1)].map(hlClip).join('');
rows.arp = synthClip(12, 16, 'ARP SYNTH 1', 16, 18, 8, 22) + synthClip(25, 29, 'ARP SYNTH 1', 16, 18, 8, 22);
rows.perc = synthClip(8, 12, 'PERC TIMBER 1', 6, 30, 6, 30) + synthClip(23, 27, 'PERC TIMBER 1', 6, 30, 6, 30);

const bigFxBars = cx => fxb(976, 1336, 101, 2, cx) + fxb(1077, 1330, 19, 8, cx) + fxb(988, 1340, 108, 8, cx) + fxb(972, 1350, 62, 8, cx) + fxb(1038, 1350, 58, 8, cx);
const tinyBar = (cx, w) => fxb(cx + w - 26, 1358, 19, 8, cx);
const FXN = 'FX & Impacts';
rows.fx = [
  [698, 709.5, ''], [823, 855.5, FXN],
  [924, 1102, FXN, bigFxBars(924)],
  [1104.6, 1151.5, FXN],
  [1170, 1239.5, FXN, tinyBar(1170, 69.5)],
  [1501, 1632, FXN, fxb(1560, 1358, 60, 8, 1501)],
  [1635, 1685, FXN], [1692, 1703, ''],
  [1799, 1831, FXN, tinyBar(1799, 32)],
  [1835, 1895, FXN, tinyBar(1835, 60)],
  [1901, 1961, FXN, tinyBar(1901, 60)],
  [1965, 2093, FXN, fxb(2000, 1340, 84, 6, 1965) + fxb(1990, 1350, 94, 8, 1965)],
  [2097, 2147, FXN],
  [2165, 2234, FXN, tinyBar(2165, 69)],
  [2446, 2492, FXN], [2494.6, 2544, FXN], [2754, 2763.6, '']
].map(([a, b, n, ex]) => folder(a, b, 'l', n, ex)).join('');
rows.vocal = [[972.5, 1077], [1212, 1236], [1302, 1335], [1571, 1597], [1963, 2070], [2204.5, 2229.6], [2297, 2327.7], [2560, 2594]]
  .map(([a, b]) => folder(a, b, 'v', 'VOCAL')).join('');
rows.v27 = vocClip(972.5, 1054) + vocClip(1963, 2047);
rows.v28 = [[1046, 1078], [1302, 1336], [1571, 1597], [2044, 2070], [2297, 2328], [2560, 2594]]
  .map(([a, b]) => clip(a, b, 'vi c-ev narrow', chip('S', 60))).join('');

/* ---------- lanes ---------- */
let lanes = '';
for (let i = 1; i <= 33; i++) lanes += `<span class="gline" style="left:${L(X(i))}px"></span>`;
const lane = (inner, cls) => `<div class="lane ${cls || ''}">${inner || ''}</div>`;
lanes += lane('', 'lane-top') + lane(rows.drums);
drumRows.forEach(r => lanes += lane(r, 'small'));
lanes += lane(rows.bass);
lanes += lane(bassClip('BASS 1', 728, 'b1')) + lane(bassClip('BASS 2', 800, 'b2')) + lane(bassClip('BASS 3', 872, 'b3'));
lanes += lane(rows.synths) + lane(rows.synth1) + lane(rows.hl) + lane(rows.arp) + lane(rows.perc);
lanes += lane(rows.fx) + lane(rows.vocal) + lane(rows.v27) + lane(rows.v28);
document.getElementById('lanes').innerHTML = lanes;
```
